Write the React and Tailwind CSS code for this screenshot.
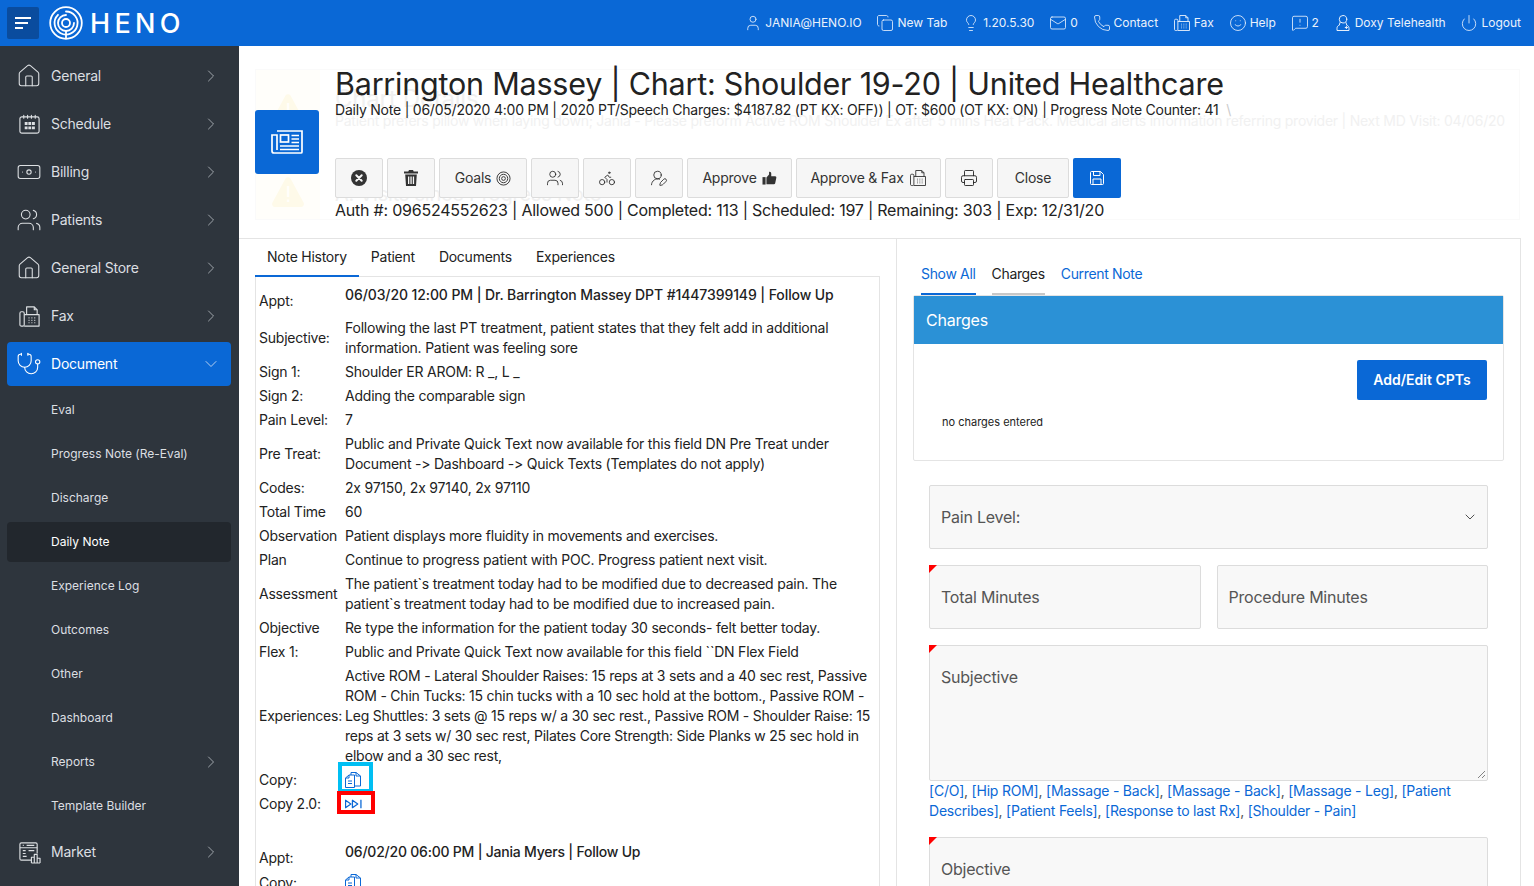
import {
  User, Copy, Lightbulb, Mail, Phone, Smile, MessageSquareWarning, Power, House, Banknote, Users,
  Stethoscope, ChevronRight, ChevronDown, Bike, UserRoundPen, Printer,
} from 'lucide-react';

const BLUE = 'bg-[#0a68d6]';

function FaxIcon({ className }) {
  return (
    <svg className={className} viewBox="0 0 24 24" fill="none" stroke="currentColor" strokeWidth="1.2" strokeLinejoin="round">
      <rect x="2" y="7" width="4.500" height="15" rx="1.500" />
      <path d="M6.500 10H22v12H6.500" />
      <path d="M9 10V2h8l3 3v5" />
      <path d="M17 2v3h3" />
      <path d="M11 13.500h1M14 13.500h1M17 13.500h1M11 16h1M14 16h1M17 16h1M11 18.500h1M14 18.500h1M17 18.500h1" />
    </svg>
  );
}

function CalendarIcon({ className }) {
  return (
    <svg className={className} viewBox="0 0 24 24" fill="none" stroke="currentColor" strokeWidth="1.2" strokeLinecap="round">
      <rect x="2" y="4" width="20" height="17" rx="2" />
      <path d="M6 2.500v3M10 2.500v3M14 2.500v3M18 2.500v3" />
      <path fill="currentColor" stroke="none" d="M7 9.500h3v3H7zM10.800 9.500h3v3h-3zM14.600 9.500h3v3h-3zM7 14h3v3H7zM10.800 14h3v3h-3zM14.600 14h3v3h-3z" />
    </svg>
  );
}

function MarketIcon({ className }) {
  return (
    <svg className={className} viewBox="0 0 24 24" fill="none" stroke="currentColor" strokeWidth="1.2" strokeLinejoin="round">
      <path d="M14 20H3.500a1.500 1.500 0 0 1-1.500-1.500v-15A1.500 1.500 0 0 1 3.500 2h15A1.500 1.500 0 0 1 20 3.500V13" />
      <path d="M2 7h18M5 4.500h1M9 4.500h8M5 10h3M5 13h3M5 16h4M11 10h6" />
      <path d="M14 23v-6h3v6M17 23v-9h3v9M20 23v-5h3v5M14 23h9" />
    </svg>
  );
}

function DoxyIcon({ className }) {
  return (
    <svg className={className} viewBox="0 0 24 24" fill="none" stroke="currentColor" strokeWidth="1.3" strokeLinecap="round">
      <circle cx="12" cy="7" r="5" />
      <path d="M8 11.500 7 15c-2 .5-3 2-3 4v3h16v-3c0-2-1-3.500-3-4l-1-3.500" />
      <path d="M15 18h3M16.500 16.500v3" />
    </svg>
  );
}

function NewspaperIcon({ className }) {
  return (
    <svg className={className} viewBox="0 0 32 24" fill="none" stroke="currentColor" strokeWidth="1.700">
      <path d="M6 1h25v21a1 1 0 0 1-1 1H3a2 2 0 0 1-2-2V5h5v15" />
      <rect x="9.500" y="5" width="8" height="7" />
      <path d="M20.500 5.500H28M20.500 9H28M20.500 12.500H28M9 16H28M9 19.500H28" />
    </svg>
  );
}

function WarningIcon({ className }) {
  return (
    <svg className={className} viewBox="0 0 32 31" fill="currentColor">
      <path d="M13.500 2.500a3 3 0 0 1 5 0l13 24a3 3 0 0 1-2.500 4.500H3a3 3 0 0 1-2.500-4.500z" />
      <path d="M14.800 10h2.400v11h-2.400zM14.800 23.500h2.400V26h-2.400z" fill="#fffefa" />
    </svg>
  );
}

function CloseCircle({ className }) {
  return (
    <svg className={className} viewBox="0 0 16 16">
      <circle cx="8" cy="8" r="8" fill="currentColor" />
      <path d="M5.300 5.300l5.400 5.400M10.700 5.300l-5.400 5.400" stroke="#f6f6f6" strokeWidth="2" strokeLinecap="round" />
    </svg>
  );
}

function TrashIcon({ className }) {
  return (
    <svg className={className} viewBox="0 0 14 16" fill="currentColor">
      <path d="M5 0h4l.7 1.500H14V3.500H0V1.500h4.300z" />
      <path d="M1.200 4.500h11.600L12 16H2zM4 6.500v7.500h1.300V6.500zM6.400 6.500v7.500h1.300V6.500zM8.800 6.500v7.500h1.300V6.500z" fillRule="evenodd" />
    </svg>
  );
}

function TargetIcon({ className }) {
  return (
    <svg className={className} viewBox="0 0 16 16" fill="none" stroke="currentColor" strokeWidth="1">
      <circle cx="8" cy="8" r="7" />
      <circle cx="8" cy="8" r="4.500" />
      <circle cx="8" cy="8" r="2" />
    </svg>
  );
}

function ThumbIcon({ className }) {
  return (
    <svg className={className} viewBox="0 0 16 16" fill="currentColor">
      <rect x="0" y="7" width="3.500" height="8.500" />
      <path d="M4.500 7.500 7.500 4V1c1.500-.5 2.500.5 2.500 2v3h4.500c1 0 1.500 1 1.300 1.800l-1.300 6.200c-.2.700-.7 1-1.500 1H4.500z" />
    </svg>
  );
}

function SaveIcon({ className }) {
  return (
    <svg className={className} viewBox="0 0 16 16" fill="none" stroke="currentColor" strokeWidth="1">
      <path d="M1.500 2.500a1 1 0 0 1 1-1h9l3 3v9a1 1 0 0 1-1 1h-11a1 1 0 0 1-1-1z" />
      <path d="M4.500 1.500v4h6.500v-4M4 14.500V9h8v5.500" />
    </svg>
  );
}

function CopyDocs({ className }) {
  return (
    <svg className={className} viewBox="0 0 16 16" fill="none" stroke="currentColor" strokeWidth="1" strokeLinejoin="round">
      <path d="M.5 6 4 3h5.500v12.500H.5z" />
      <path d="M.5 6H4V3" />
      <path d="M6 3V.5h5l4.500 3.500v10h-6" />
      <path d="M11 .5V4h4.500" />
      <path d="M3 9h4M3 11.500h4" />
    </svg>
  );
}

function ForwardIcon({ className }) {
  return (
    <svg className={className} viewBox="0 0 16 9" fill="none" stroke="currentColor" strokeWidth="1.200" strokeLinejoin="round">
      <path d="M.5 1v7l5-3.500zM7 1v7l5-3.500zM15 .5v8" />
    </svg>
  );
}

function Logo({ className }) {
  return (
    <svg className={className} viewBox="0 0 34 34" fill="none" stroke="currentColor" strokeLinecap="round">
      <circle cx="17" cy="17" r="15.800" strokeWidth="1.800" />
      <path d="M17 5.500a11.500 11.500 0 1 1-8 3.300" strokeWidth="1.800" />
      <path d="M17 9a8 8 0 1 0 8 8" strokeWidth="1.800" />
      <circle cx="17" cy="17" r="4" strokeWidth="1.800" />
      <path d="M17 25v7" strokeWidth="1.800" />
    </svg>
  );
}

const TOP_LINKS = [
  [User, 'JANIA@HENO.IO'],
  [Copy, 'New Tab'],
  [Lightbulb, '1.20.5.30'],
  [Mail, '0'],
  [Phone, 'Contact'],
  [FaxIcon, 'Fax'],
  [Smile, 'Help'],
  [MessageSquareWarning, '2'],
  [DoxyIcon, 'Doxy Telehealth'],
  [Power, 'Logout'],
];

const NAV = [
  { label: 'General', icon: House, arrow: true },
  { label: 'Schedule', icon: CalendarIcon, custom: true, arrow: true },
  { label: 'Billing', icon: Banknote, arrow: true },
  { label: 'Patients', icon: Users, arrow: true },
  { label: 'General Store', icon: House, arrow: true },
  { label: 'Fax', icon: FaxIcon, custom: true, arrow: true },
  { label: 'Document', icon: Stethoscope, open: true },
  { label: 'Eval', sub: true },
  { label: 'Progress Note (Re-Eval)', sub: true },
  { label: 'Discharge', sub: true },
  { label: 'Daily Note', sub: true, current: true },
  { label: 'Experience Log', sub: true },
  { label: 'Outcomes', sub: true },
  { label: 'Other', sub: true },
  { label: 'Dashboard', sub: true },
  { label: 'Reports', sub: true, arrow: true },
  { label: 'Template Builder', sub: true },
  { label: 'Market', icon: MarketIcon, custom: true, arrow: true },
];

const NOTE_ROWS = [
  ['Subjective:', 'Following the last PT treatment, patient states that they felt add in additional information. Patient was feeling sore'],
  ['Sign 1:', 'Shoulder ER AROM: R _, L _'],
  ['Sign 2:', 'Adding the comparable sign'],
  ['Pain Level:', '7'],
  ['Pre Treat:', 'Public and Private Quick Text now available for this field DN Pre Treat under Document -> Dashboard -> Quick Texts (Templates do not apply)'],
  ['Codes:', '2x 97150, 2x 97140, 2x 97110'],
  ['Total Time', '60'],
  ['Observation', 'Patient displays more fluidity in movements and exercises.'],
  ['Plan', 'Continue to progress patient with POC. Progress patient next visit.'],
  ['Assessment', 'The patient`s treatment today had to be modified due to decreased pain. The patient`s treatment today had to be modified due to increased pain.'],
  ['Objective', 'Re type the information for the patient today 30 seconds- felt better today.'],
  ['Flex 1:', 'Public and Private Quick Text now available for this field ``DN Flex Field'],
  ['Experiences:', 'Active ROM - Lateral Shoulder Raises: 15 reps at 3 sets and a 40 sec rest, Passive ROM - Chin Tucks: 15 chin tucks with a 10 sec hold at the bottom., Passive ROM - Leg Shuttles: 3 sets @ 15 reps w/ a 30 sec rest., Passive ROM - Shoulder Raise: 15 reps at 3 sets w/ 30 sec rest, Pilates Core Strength: Side Planks w 25 sec hold in elbow and a 30 sec rest,'],
];

const QUICK_LINKS = ['[C/O]', '[Hip ROM]', '[Massage - Back]', '[Massage - Back]', '[Massage - Leg]', '[Patient Describes]', '[Patient Feels]', '[Response to last Rx]', '[Shoulder - Pain]'];

function NavItem({ item }) {
  const Icon = item.icon;
  const rowHeight = item.sub ? 'h-11' : 'h-12';
  const box = item.open ? `${BLUE} text-white` : item.current ? 'bg-[#22272d] text-white' : 'text-[#dcdfe2]';
  return (
    <div className={`${rowHeight} flex items-center`}>
      <div className={`${box} ${item.open ? 'h-11' : item.current ? 'h-10' : 'h-full'} flex w-full items-center rounded-[4px] pl-3 pr-[10px]`}>
        <span className="flex w-8 shrink-0 items-center">
          {Icon && (item.custom
            ? <Icon className="-ml-[1px] h-[23px] w-[23px]" />
            : <Icon className="-ml-[3px] h-[26px] w-[26px]" strokeWidth={1} />)}
        </span>
        <span className={`flex-1 ${item.sub ? 'text-xs' : 'text-sm tracking-[-0.016em]'}`}>{item.label}</span>
        {item.arrow && <ChevronRight className="h-5 w-5 text-[#a9afb5]" strokeWidth={1.1} />}
        {item.open && <ChevronDown className="h-5 w-5 text-[#c5d9f2]" strokeWidth={1.1} />}
      </div>
    </div>
  );
}

function ActionButton({ children, className = 'w-12' }) {
  return (
    <div className={`${className} flex h-10 items-center justify-center gap-[5px] rounded-[2px] border border-[#dcdcdc] bg-[#f6f6f6] text-sm text-[#333]`}>
      {children}
    </div>
  );
}

function Field({ label, className = '', required, children }) {
  return (
    <div className={`${className} relative rounded-[2px] border border-[#dcdcdc] bg-[#f8f8f8] px-[11px] text-base text-[#555]`}>
      {required && <span className="absolute -left-px -top-px h-0 w-0 border-r-[8px] border-t-[8px] border-r-transparent border-t-[#f00]" />}
      {children || label}
    </div>
  );
}

function NoteRow({ label, children }) {
  return (
    <div className="flex items-center py-[2px] leading-5">
      <span className="w-[86px] shrink-0">{label}</span>
      <div className="w-[528px]">{children}</div>
    </div>
  );
}

export default function App() {
  return (
    <div className="h-screen overflow-hidden bg-white font-['Inter',sans-serif] text-[#222] [font-feature-settings:'calt'_0]">
      <header className={`${BLUE} flex h-[46px] items-center pl-[7px] pr-[13px] text-white`}>
        <div className="flex h-8 w-8 flex-col justify-center gap-[3px] rounded-[2px] bg-[#0a4c9e] pl-2">
          <span className="h-[2px] w-4 bg-white" />
          <span className="h-[2px] w-[13px] bg-white" />
          <span className="h-[2px] w-2 bg-white" />
        </div>
        <Logo className="ml-[10px] h-[34px] w-[34px]" />
        <span className="ml-[7px] text-[27px] font-medium leading-none tracking-[0.16em]">HENO</span>
        <nav className="ml-auto flex items-center gap-[15.750px] text-xs text-[#eaf2fc]">
          {TOP_LINKS.map(([Icon, label]) => (
            <span key={label} className="flex items-center gap-[4px]">
              <Icon className="-mx-px h-[18px] w-[18px]" strokeWidth={1.1} />
              {label}
            </span>
          ))}
        </nav>
      </header>

      <div className="flex h-[840px]">
        <aside className="w-[239px] shrink-0 bg-[#2e353d] pl-[7px] pr-2 pt-[6px]">
          {NAV.map((item) => <NavItem key={item.label} item={item} />)}
        </aside>

        <main className="min-w-0 flex-1 pr-[13px] tracking-[-0.014em]">
          <section className="relative h-[193px] border-b border-[#e4e4e4] pl-4 pt-[23px]">
            {/* faded chart details sitting behind the header */}
            <div className="absolute left-4 top-[23px] h-[151px] w-[1265px] border border-[#fafafa] text-[#f1f1f1]">
              <div className="absolute bottom-0 left-0 top-0 w-[64px] bg-[#fffefa]" />
              <WarningIcon className="absolute left-[16px] top-[23px] h-[31px] w-8 text-[#fefae9]" />
              <WarningIcon className="absolute left-[16px] top-[106px] h-[31px] w-8 text-[#fefae9]" />
              <span className="absolute left-[79px] top-[13px] text-2xl text-[#f0f0f0]">Chart Details</span>
              <span className="absolute left-[79px] top-[41px] whitespace-nowrap text-sm tracking-[-0.017em]">Patient prefers pillow when laying down; Jania - Please preform Active ROM Shoulder Ex after 5 mins Heat Pack. Medical alerts information referring provider | Next MD Visit: 04/06/20</span>
              <span className="absolute left-[79px] top-[110px] text-xl">A: Visits since Progress Note</span>
            </div>

            <div className="relative flex">
              <div className={`${BLUE} mt-[41px] flex h-16 w-16 shrink-0 items-center justify-center rounded-[3px] text-white`}>
                <NewspaperIcon className="h-6 w-8" />
              </div>
              <div className="ml-4">
                <h1 className="mt-[-1px] whitespace-nowrap text-[30.500px] leading-[32px]">Barrington Massey | Chart: Shoulder 19-20 | United Healthcare</h1>
                <p className="mt-[1px] whitespace-nowrap text-sm leading-[18px]">Daily Note | 06/05/2020 4:00 PM | 2020 PT/Speech Charges: $4187.82 (PT KX: OFF)) | OT: $600 (OT KX: ON) | Progress Note Counter: 41 <span className="ml-1 text-[#ccc]">\</span></p>
                <div className="mt-[39px] flex gap-1">
                  <ActionButton><CloseCircle className="h-4 w-4" /></ActionButton>
                  <ActionButton><TrashIcon className="h-4 w-[14px]" /></ActionButton>
                  <ActionButton className="w-[88px]">Goals <TargetIcon className="h-[15px] w-[15px]" /></ActionButton>
                  <ActionButton><Users className="h-[18px] w-[18px] text-[#222]" strokeWidth={1.1} /></ActionButton>
                  <ActionButton><Bike className="h-[18px] w-[18px] text-[#222]" strokeWidth={1.1} /></ActionButton>
                  <ActionButton><UserRoundPen className="h-[18px] w-[18px] text-[#222]" strokeWidth={1.1} /></ActionButton>
                  <ActionButton className="w-[105px]">Approve <ThumbIcon className="h-[14px] w-[15px]" /></ActionButton>
                  <ActionButton className="w-[145px]">Approve &amp; Fax <FaxIcon className="h-[18px] w-[18px]" /></ActionButton>
                  <ActionButton><Printer className="h-[18px] w-[18px] text-[#222]" strokeWidth={1.2} /></ActionButton>
                  <ActionButton className="w-[72px]">Close</ActionButton>
                  <div className={`${BLUE} flex h-10 w-12 items-center justify-center rounded-[2px] text-white`}>
                    <SaveIcon className="h-4 w-4" />
                  </div>
                </div>
                <p className="whitespace-nowrap text-base leading-6">Auth #: 096524552623 | Allowed 500 | Completed: 113 | Scheduled: 197 | Remaining: 303 | Exp: 12/31/20</p>
              </div>
            </div>
          </section>

          <div className="flex h-[647px] border-r border-[#e4e4e4]">
            <section className="w-[658px] shrink-0 border-r border-[#e4e4e4] pl-4 pr-4 pt-1">
              <div className="flex h-[34px] border-b border-[#e4e4e4] text-sm leading-5 tracking-[-0.018em]">
                <span className="-mb-px border-b-2 border-[#0a68d6] px-3 pt-1">Note History</span>
                <span className="px-3 pt-1">Patient</span>
                <span className="px-3 pt-1">Documents</span>
                <span className="px-3 pt-1">Experiences</span>
              </div>
              <div className="h-[620px] border-l border-r border-[#e4e4e4] pl-[3px] pt-2 text-sm">
                <div className="flex h-[31px] items-center leading-5">
                  <span className="w-[86px] shrink-0">Appt:</span>
                  <span className="self-start font-medium tracking-[-0.007em]">06/03/20 12:00 PM | Dr. Barrington Massey DPT #1447399149 | Follow Up</span>
                </div>
                {NOTE_ROWS.map(([label, text]) => (
                  <NoteRow key={label} label={label}>{text}</NoteRow>
                ))}
                <NoteRow label="Copy:"><CopyDocs className="h-4 w-4 text-[#0a68d6]" /></NoteRow>
                <NoteRow label="Copy 2.0:"><ForwardIcon className="h-[10px] w-[17px] text-[#0a68d6]" /></NoteRow>
                <div className="mt-[26px] flex h-[31px] items-center leading-5">
                  <span className="w-[86px] shrink-0">Appt:</span>
                  <span className="self-start font-medium">06/02/20 06:00 PM | Jania Myers | Follow Up</span>
                </div>
                <div className="flex leading-5">
                  <span className="w-[86px] shrink-0">Copy:</span>
                  <CopyDocs className="mt-[1px] h-4 w-4 text-[#0a68d6]" />
                </div>
              </div>
            </section>

            <section className="min-w-0 flex-1 px-4 pt-4">
              <div className="flex h-10 gap-4 pl-2 text-sm leading-5 tracking-[-0.024em]">
                <span className="h-10 border-b-2 border-[#0a68d6] pt-[9px] text-[#0a68d6]">Show All</span>
                <span className="h-10 border-b-2 border-[#c8c8c8] pt-[9px]">Charges</span>
                <span className="pt-[9px] text-[#0a68d6]">Current Note</span>
              </div>
              <div className="h-[166px] rounded-[2px] border border-[#e4e4e4]">
                <div className="flex h-12 items-center bg-[#2b91d6] px-3 text-base text-white">Charges</div>
                <div className="relative pr-4 pt-4 tracking-normal">
                  <div className={`${BLUE} ml-auto flex h-10 w-[130px] items-center justify-center rounded-[2px] text-sm font-semibold text-white`}>Add/Edit CPTs</div>
                  <p className="ml-7 mt-4 text-[11px] leading-[13px]">no charges entered</p>
                </div>
              </div>

              <div className="mx-4 mt-6">
                <Field className="flex h-16 items-center justify-between">
                  Pain Level:
                  <ChevronDown className="mr-[-2px] h-4 w-4 text-[#444]" strokeWidth={1.4} />
                </Field>
                <div className="mt-4 flex gap-4">
                  <Field label="Total Minutes" required className="flex h-16 flex-1 items-center" />
                  <Field label="Procedure Minutes" className="flex h-16 flex-1 items-center" />
                </div>
                <Field required className="mt-4 h-[136px] pt-[19px] leading-6">
                  Subjective
                  <svg className="absolute bottom-[2px] right-[2px] h-2 w-2 text-[#666]" viewBox="0 0 8 8" stroke="currentColor" strokeWidth="0.8">
                    <path d="M1 8 8 1M5 8 8 5" />
                  </svg>
                </Field>
                <p className="text-sm leading-5 text-[#555]">
                  {QUICK_LINKS.map((link, i) => (
                    <span key={i}>
                      <span className="text-[#0a68d6]">{link}</span>
                      {i < QUICK_LINKS.length - 1 && ', '}
                    </span>
                  ))}
                </p>
                <Field label="Objective" required className="mt-4 h-[64px] pt-[19px] leading-6" />
              </div>
            </section>
          </div>
        </main>
      </div>

      {/* review markers drawn over the note history */}
      <div className="absolute left-[338px] top-[762px] h-[31px] w-[35px] border-[4px] border-[#00bff3]" />
      <div className="absolute left-[337px] top-[791px] h-[23px] w-[38px] border-[4px] border-[#f00]" />
    </div>
  );
}
